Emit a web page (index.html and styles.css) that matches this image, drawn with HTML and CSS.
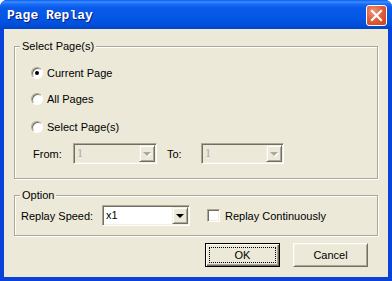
FILE: index.html
```html
<!DOCTYPE html>
<html lang="en">
<head>
  <meta charset="UTF-8" />
  <title>Page Replay</title>
  <link rel="stylesheet" href="styles.css">
</head>
<body>
  <div class="window">
    <div class="titlebar">
      <span class="title">Page Replay</span>
      <button class="close" aria-label="Close">
        <svg width="13" height="13" viewBox="0 0 13 13">
          <path d="M2 2 L11 11 M11 2 L2 11" stroke="#fff" stroke-width="2.2" stroke-linecap="square" fill="none"/>
        </svg>
      </button>
    </div>

    <div class="client">
      <fieldset class="group group-pages">
        <legend>Select Page(s)</legend>
        <label class="radio-row row-1"><span class="radio checked"></span>Current Page</label>
        <label class="radio-row row-2"><span class="radio"></span>All Pages</label>
        <label class="radio-row row-3"><span class="radio"></span>Select Page(s)</label>
        <div class="range-row">
          <span class="range-label from">From:</span>
          <div class="combo disabled combo-from">
            <span class="combo-text">1</span>
            <span class="combo-btn"><span class="arrow"></span></span>
          </div>
          <span class="range-label to">To:</span>
          <div class="combo disabled combo-to">
            <span class="combo-text">1</span>
            <span class="combo-btn"><span class="arrow"></span></span>
          </div>
        </div>
      </fieldset>

      <fieldset class="group group-option">
        <legend>Option</legend>
        <div class="option-row">
          <span class="speed-label">Replay Speed:</span>
          <div class="combo combo-speed">
            <span class="combo-text">x1</span>
            <span class="combo-btn"><span class="arrow"></span></span>
          </div>
          <label class="check-row"><span class="checkbox"></span>Replay Continuously</label>
        </div>
      </fieldset>

      <div class="buttons">
        <button class="btn default"><span class="focus">OK</span></button>
        <button class="btn">Cancel</button>
      </div>
    </div>
  </div>
</body>
</html>
```

FILE: styles.css
```css
body {
  margin: 0;
  background: #fff;
  font-family: "Liberation Sans", Arial, sans-serif;
  font-size: 11px;
  color: #000;
}
.window {
  width: 392px;
  height: 281px;
  box-sizing: border-box;
  display: flex;
  flex-direction: column;
  background: #0842d8;
  border-radius: 7px 7px 0 0;
  overflow: hidden;
}
.titlebar {
  height: 29px;
  flex: none;
  display: flex;
  align-items: center;
  justify-content: space-between;
  padding: 0 5px 0 7px;
  background: linear-gradient(180deg, #0a5cf4 0, #3d8fff 2px, #1a6cf8 4px, #0a5ae8 8px, #0558e6 16px, #0050dd 24px, #0045c8 29px);
}
.title {
  font-family: "Liberation Mono", "Courier New", monospace;
  font-weight: bold;
  font-size: 13px;
  color: #fff;
  text-shadow: 1px 1px 0 #0a1a80;
  padding-top: 1px;
}
.close {
  width: 21px;
  height: 21px;
  padding: 0;
  border: 1px solid #fff;
  border-radius: 3px;
  background: radial-gradient(circle at 35% 30%, #ee9a7c 0, #e0603c 45%, #c8401c 100%);
  display: flex;
  align-items: center;
  justify-content: center;
  margin-top: 1px;
}
.client {
  flex: 1;
  margin: 0 4px 4px;
  background: #ece9d8;
  padding: 11px 10px 0;
}
.group {
  margin: 0;
  padding: 0 9px 0 5px;
  border: 1px solid #aca899;
  box-shadow: inset 1px 1px 0 #fff, 1px 1px 0 #fff;
  display: flex;
  flex-direction: column;
}
.group legend {
  padding: 0 2px;
  line-height: 13px;
  background: #ece9d8;
}
.group-pages {
  padding-top: 10px;
  padding-bottom: 14px;
}
.radio-row {
  height: 20px;
  display: flex;
  align-items: center;
  gap: 4px;
  margin-left: 11px;
}
.row-2 {
  margin-top: 6px;
}
.row-3 {
  margin-top: 8px;
}
.radio {
  width: 12px;
  height: 12px;
  box-sizing: border-box;
  border-radius: 50%;
  background: #fff;
  border: 1px solid;
  border-color: #aca899 #fff #fff #aca899;
  box-shadow: inset 1px 1px 0 #716f64;
  display: flex;
  align-items: center;
  justify-content: center;
}
.radio.checked::after {
  content: "";
  width: 4px;
  height: 4px;
  border-radius: 50%;
  background: #000;
}
.range-row {
  margin-top: 6px;
  height: 21px;
  display: flex;
  align-items: center;
}
.range-label.from {
  width: 40px;
  margin-left: 13px;
}
.range-label.to {
  width: 34px;
  margin-left: 10px;
}
.combo {
  height: 21px;
  box-sizing: border-box;
  display: flex;
  background: #fff;
  border: 1px solid;
  border-color: #aca899 #fff #fff #aca899;
  box-shadow: inset 1px 1px 0 #716f64, inset -1px -1px 0 #f1efe2;
  padding: 1px;
}
.combo-from {
  width: 84px;
}
.combo-to {
  width: 83px;
}
.combo-speed {
  width: 88px;
}
.combo.disabled {
  background: #ece9d8;
  color: #aca899;
}
.combo-text {
  flex: 1;
  padding-left: 2px;
  line-height: 17px;
}
.combo.disabled .combo-text {
  font-family: "Liberation Serif", serif;
  font-size: 12px;
}
.combo-btn {
  width: 16px;
  height: 17px;
  box-sizing: border-box;
  background: #ece9d8;
  border: 1px solid;
  border-color: #f1efe2 #716f64 #716f64 #f1efe2;
  box-shadow: inset 1px 1px 0 #fff, inset -1px -1px 0 #aca899;
  display: flex;
  align-items: center;
  justify-content: center;
}
.arrow {
  width: 0;
  height: 0;
  border-left: 4px solid transparent;
  border-right: 4px solid transparent;
  border-top: 4px solid #000;
  margin-top: 1px;
}
.combo.disabled .arrow {
  border-top-color: #aca899;
  filter: drop-shadow(1px 1px 0 #fff);
}
.group-option {
  margin-top: 10px;
  padding-top: 3px;
  padding-bottom: 9px;
}
.option-row {
  height: 21px;
  display: flex;
  align-items: center;
}
.speed-label {
  width: 81px;
  margin-left: 1px;
}
.check-row {
  display: flex;
  align-items: center;
  gap: 5px;
  margin-left: 17px;
}
.checkbox {
  width: 13px;
  height: 13px;
  box-sizing: border-box;
  background: #fff;
  border: 1px solid;
  border-color: #aca899 #fff #fff #aca899;
  box-shadow: inset 1px 1px 0 #716f64, inset -1px -1px 0 #f1efe2;
}
.buttons {
  display: flex;
  justify-content: flex-end;
  gap: 13px;
  margin: 7px 10px 0 0;
}
.btn {
  width: 75px;
  height: 24px;
  padding: 0;
  font: inherit;
  color: #000;
  background: #ece9d8;
  border: 1px solid;
  border-color: #fff #716f64 #716f64 #fff;
  box-shadow: inset 1px 1px 0 #f1efe2, inset -1px -1px 0 #aca899;
}
.btn.default {
  border: 1px solid #000;
  box-shadow: inset 1px 1px 0 #fff, inset -1px -1px 0 #716f64, inset -2px -2px 0 #aca899;
  padding: 3px;
}
.btn .focus {
  display: block;
  height: 100%;
  box-sizing: border-box;
  border: 1px dotted #000;
  line-height: 14px;
}
```
